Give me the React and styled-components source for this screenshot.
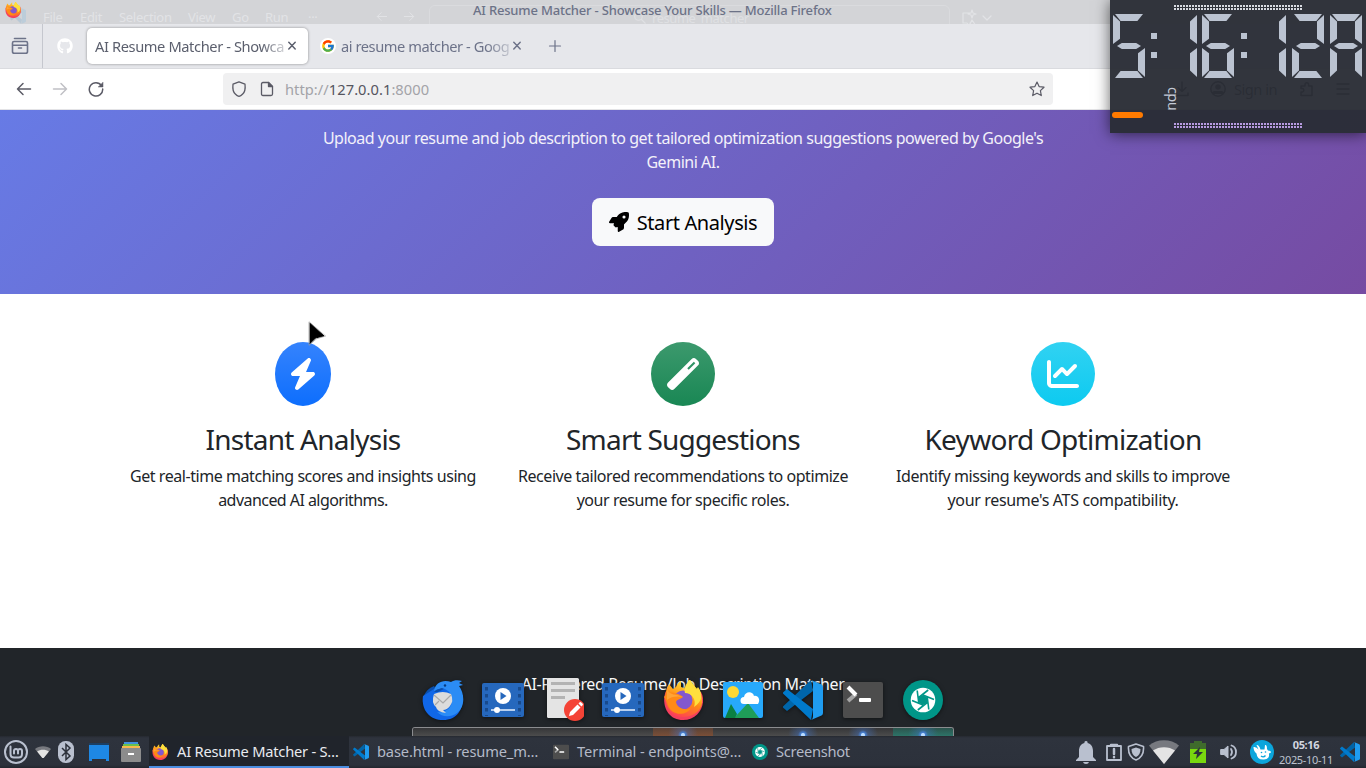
import React from "react";
import styled, { createGlobalStyle, css } from "styled-components";
import { FaGithub, FaRocket, FaWandMagic, FaChartLine } from "react-icons/fa6";
import { FcGoogle } from "react-icons/fc";

const GlobalStyle = createGlobalStyle`
  * { box-sizing: border-box; }
  body { margin: 0; overflow: hidden; font-family: "Noto Sans", "Open Sans", sans-serif; }
  svg { display: block; flex: none; }
`;

const Desktop = styled.div`
  position: relative;
  display: flex;
  flex-direction: column;
  width: 1366px;
  height: 768px;
  overflow: hidden;
  background: #fff;
`;

/* ---------- window chrome ---------- */
const TitleBar = styled.header`
  position: relative;
  flex: none;
  height: 24px;
  overflow: hidden;
  background: #d3d4d7;
`;
const TitleText = styled.div`
  position: relative;
  padding-left: 473px;
  font-size: 13px;
  line-height: 21px;
  font-weight: 500;
  letter-spacing: -0.19px;
  color: #6c7287;
  white-space: nowrap;
`;
const TitleIcon = styled.div`
  position: absolute;
  left: 5px;
  top: 2px;
`;
const GhostMenu = styled.div`
  position: absolute;
  inset: 8px 0 0 0;
  display: flex;
  padding-left: 10px;
  font-size: 13px;
  line-height: 18px;
  color: #e2e3e6;
  white-space: nowrap;
`;
const GhostItem = styled.span`
  width: ${(p) => p.$w}px;
  letter-spacing: -0.3px;
`;
const GhostSearch = styled.span`
  display: flex;
  align-items: center;
  gap: 6px;
  width: 521px;
  height: 30px;
  margin-top: -3px;
  padding: 0 0 5px 204px;
  border: 1px solid #dadbde;
  border-radius: 6px;
  letter-spacing: -0.45px;
  color: #dfe0e3;
`;
const GhostAssist = styled.span`
  margin-left: 12px;
`;

const TabBar = styled.div`
  display: flex;
  flex: none;
  height: 45px;
  background: #e6e7eb;
  border-bottom: 1px solid #dadbdf;
  color: #6d7389;
`;
const TabTool = styled.div`
  display: flex;
  align-items: center;
  justify-content: center;
  width: ${(p) => p.$w}px;
  padding-right: ${(p) => p.$shift || 0}px;
  ${(p) => p.$divided && css`border-right: 1px solid #c5c7ce;`}
`;
const Tab = styled.div`
  display: flex;
  align-items: center;
  width: ${(p) => p.$w}px;
  height: 36px;
  margin: 4px 0 0 0;
  padding: 0 9px 0 8px;
  border-radius: 5px;
  color: #6d7389;
  ${(p) => p.$active && css`
    background: #fff;
    color: #5b5f6d;
    box-shadow: 0 0 3px rgba(0, 0, 0, 0.4);
  `}
`;
const TabLabel = styled.span`
  flex: 1;
  overflow: hidden;
  font-size: 14.67px;
  letter-spacing: ${(p) => p.$ls}px;
  white-space: nowrap;
  mask-image: linear-gradient(to right, #000 calc(100% - 24px), rgba(0, 0, 0, 0.25));
`;
const Favicon = styled.span`
  display: flex;
  align-items: center;
  justify-content: center;
  width: 16px;
  height: 16px;
  margin: 0 5px 0 4px;
  border-radius: 8px;
  background: #fff;
`;

const ToolBar = styled.div`
  display: flex;
  align-items: center;
  flex: none;
  height: 41px;
  background: #fff;
  border-bottom: 1px solid #e3e3e6;
  color: #5b5b66;
`;
const NavButtons = styled.div`
  display: flex;
  align-items: center;
  gap: 20px;
  width: 223px;
  padding-left: 16px;
`;
const UrlBox = styled.div`
  display: flex;
  align-items: center;
  gap: 12px;
  width: 830px;
  height: 32px;
  padding: 0 8px;
  border-radius: 4px;
  background: #f0f0f1;
`;
const Url = styled.span`
  flex: 1;
  margin-left: -2px;
  font-size: 14.67px;
  letter-spacing: 0.05px;
  color: #a3a3a8;
  b { font-weight: 400; color: #55555f; }
`;
const Account = styled.div`
  display: flex;
  align-items: center;
  gap: 20px;
  margin-left: 121px;
  font-size: 14.67px;
  letter-spacing: -0.5px;
  color: #333;
  span { width: 45px; margin-left: -12px; }
`;

/* ---------- page ---------- */
const Hero = styled.section`
  display: flex;
  flex-direction: column;
  align-items: center;
  flex: none;
  height: 184px;
  padding-top: 16px;
  background: linear-gradient(135deg, #667eea 0%, #764ba2 100%) bottom / 100% 291px no-repeat;
`;
const Lead = styled.p`
  margin: 0 0 24px;
  font-size: 16px;
  line-height: 24px;
  letter-spacing: -0.48px;
  text-align: center;
  color: #f3f1fa;
`;
const StartButton = styled.button`
  display: flex;
  align-items: center;
  justify-content: center;
  gap: 8px;
  width: 182px;
  height: 48px;
  padding: 0;
  border: 0;
  border-radius: 8px;
  background: #f8f9fa;
  color: #000;
  font: 400 20px "Noto Sans", sans-serif;
  letter-spacing: -0.4px;
`;
const Features = styled.section`
  display: grid;
  grid-template-columns: repeat(3, 380px);
  justify-content: center;
  flex: none;
  height: 354px;
  padding-top: 48px;
`;
const Feature = styled.article`
  display: flex;
  flex-direction: column;
  align-items: center;
  text-align: center;
  color: #212529;
`;
const FeatureIcon = styled.div`
  display: flex;
  align-items: center;
  justify-content: center;
  width: ${(p) => p.$w}px;
  height: 64px;
  border-radius: 50%;
  color: #fff;
  background: linear-gradient(180deg, ${(p) => p.$from}, ${(p) => p.$to});
`;
const FeatureTitle = styled.h3`
  margin: 16px 0 8px;
  font-size: 28px;
  line-height: 34px;
  font-weight: 400;
  letter-spacing: ${(p) => p.$ls}px;
`;
const FeatureText = styled.p`
  margin: 0;
  font-size: 16px;
  line-height: 24px;
  letter-spacing: -0.44px;
`;
const Tail = styled.span`
  letter-spacing: ${(p) => p.$ls}px;
`;
const Footer = styled.footer`
  flex: none;
  height: 88px;
  padding-top: 24px;
  background: #212529;
  color: #f8f9fa;
  font-size: 16px;
  line-height: 24px;
  letter-spacing: -0.37px;
  text-align: center;
`;

/* ---------- taskbar ---------- */
const TaskBar = styled.nav`
  display: flex;
  flex: none;
  height: 32px;
  background: linear-gradient(180deg, #252930 0, #2e333d 2px, #2c313b 29px, #22262e 32px);
  color: #b4bac8;
`;
const Launchers = styled.div`
  display: flex;
  align-items: center;
  flex: none;
  width: 149px;
  padding-left: 3px;
`;
const Divider = styled.i`
  width: 2px;
  height: 23px;
  margin: 0 9px 0 5px;
  background: #696e7a;
`;
const Task = styled.div`
  display: flex;
  align-items: center;
  gap: ${(p) => (p.$active ? 9 : 8)}px;
  width: 200px;
  padding-left: ${(p) => p.$pad}px;
  font-size: 14.67px;
  letter-spacing: ${(p) => p.$ls}px;
  white-space: nowrap;
  border-bottom: 2px solid transparent;
  ${(p) => p.$active && css`
    background: #20242b;
    border-color: #4a8de0;
    color: #e9ebf0;
  `}
  svg { margin-top: 2px; }
`;
const Tray = styled.div`
  display: flex;
  align-items: center;
  margin-left: auto;
  padding-right: 5px;
`;
const TrayItem = styled.span`
  display: flex;
  flex: none;
  justify-content: center;
  width: ${(p) => p.$w}px;
`;
const DateTime = styled.div`
  display: flex;
  flex-direction: column;
  align-items: center;
  width: 56px;
  margin-right: 5px;
  font-size: 11px;
  line-height: 15px;
  letter-spacing: -0.34px;
  color: #bcc2cf;
  b { color: #d3d7e0; }
`;

/* ---------- dock ---------- */
const Dock = styled.div`
  position: absolute;
  left: 412px;
  top: 676px;
  display: flex;
  flex-direction: column;
  width: 542px;
  height: 60px;
`;
const DockIcons = styled.div`
  position: absolute;
  inset: 0 0 auto 1px;
  display: flex;
`;
const DockIcon = styled.span`
  display: flex;
  align-items: center;
  justify-content: center;
  width: 60px;
  height: 48px;
  filter: drop-shadow(0 1px 2px rgba(0, 0, 0, 0.5));
`;
const DockShelf = styled.div`
  display: flex;
  height: 9px;
  margin-top: 51px;
  overflow: hidden;
  border: 1px solid #8b8c8f;
  border-bottom: 0;
  border-radius: 3px 3px 0 0;
`;
const ShelfCell = styled.span`
  width: 60px;
  background: linear-gradient(180deg, ${(p) => p.$top || "#353638"}, ${(p) => p.$bottom || "#4c4c4c"});
  ${(p) => p.$running && css`
    background:
      radial-gradient(circle at 50% 7px, #b9dcff 0 1.5px, #477fd0 2.5px, rgba(65, 120, 210, 0.35) 5px, transparent 15px),
      linear-gradient(180deg, ${p.$top || "#353638"}, ${p.$bottom || "#4c4c4c"});
  `}
`;

/* ---------- clock widget ---------- */
const Widget = styled.aside`
  position: absolute;
  right: 0;
  top: 0;
  width: 256px;
  height: 133px;
  background: rgba(42, 45, 53, 0.96);
  box-shadow: 0 1px 14px rgba(0, 0, 0, 0.6);
`;
const DotStrip = styled.div`
  width: 128px;
  height: 5px;
  margin-left: 64px;
  background: linear-gradient(90deg, ${(p) => p.$color} 2px, transparent 2px) 0 0 / 3px 3px;
  mask: linear-gradient(180deg, #000 2px, transparent 2px) 0 0 / 3px 3px;
`;
const WidgetTop = styled.div`
  padding-top: 5px;
`;
const Digits = styled.div`
  display: flex;
  margin: 4px 0 0 3px;
`;
const Digit = styled.span`
  position: relative;
  flex: none;
  width: 32px;
  height: 64px;
  margin-right: ${(p) => p.$gap}px;
`;
const places = {
  a: "left:2px;top:0;width:28px;height:7px;clip-path:polygon(0 0,100% 0,80% 100%,20% 100%);",
  d: "left:2px;bottom:0;width:28px;height:7px;clip-path:polygon(20% 0,80% 0,100% 100%,0 100%);",
  g: "left:4px;top:29px;width:24px;height:6px;clip-path:polygon(0 50%,20% 0,80% 0,100% 50%,80% 100%,20% 100%);",
  f: "left:0;top:1px;width:7px;height:29px;clip-path:polygon(0 0,100% 22%,100% 82%,0 100%);",
  e: "left:0;top:34px;width:7px;height:29px;clip-path:polygon(0 0,100% 18%,100% 78%,0 100%);",
  b: "right:0;top:1px;width:7px;height:29px;clip-path:polygon(0 22%,100% 0,100% 100%,0 82%);",
  c: "right:0;top:34px;width:7px;height:29px;clip-path:polygon(0 18%,100% 0,100% 100%,0 78%);",
};
const Segment = styled.i`
  position: absolute;
  background: #bbc3d1;
  ${(p) => places[p.$at]}
`;
const Colon = styled.span`
  display: flex;
  flex-direction: column;
  gap: 13px;
  width: 6px;
  margin-right: ${(p) => p.$gap}px;
  padding-top: 19px;
  i { height: 6px; background: #bbc3d1; }
`;
const Gauge = styled.div`
  display: flex;
  align-items: flex-end;
  height: 40px;
`;
const GaugeBar = styled.i`
  width: 31px;
  height: 6px;
  margin: 0 0 0 2px;
  border-radius: 3px;
  background: #ff7a00;
`;
const GaugeLabel = styled.span`
  margin: 0 0 6px 23px;
  height: 25px;
  font-size: 14.5px;
  line-height: 16px;
  letter-spacing: -0.6px;
  writing-mode: vertical-rl;
  color: #c3c9d6;
`;

const Stroke = ({ size = 16, w = 1.5, children, vb = "0 0 16 16", ...rest }) => (
  <svg width={size} height={size} viewBox={vb} fill="none" stroke="currentColor" strokeWidth={w} strokeLinecap="round" strokeLinejoin="round" {...rest}>
    {children}
  </svg>
);

const Close = () => <Stroke size={14} w={1.5} vb="0 0 14 14"><path d="M3.800 3.300l6.400 6.600M10.200 3.300l-6.400 6.600" /></Stroke>;

const Firefox = ({ size }) => (
  <svg width={size} height={size} viewBox="0 0 40 40">
    <defs>
      <linearGradient id="flame" x1="0.7" y1="0" x2="0.3" y2="1">
        <stop offset="0.2" stopColor="#ffd02e" /><stop offset="0.55" stopColor="#ff8a16" /><stop offset="1" stopColor="#ff3d57" />
      </linearGradient>
    </defs>
    <path fill="#f43f5e" d="M3 11C-2 22 3 40 20 40s24-18 18-28z" />
    <path fill="url(#flame)" d="M4 8c0-1 1-2 2-4l4 5 3-2c1-3 3-5 5-6v6l6 2 1-8 2-2c1 5 6 8 9 12 8 12 0 26-15 26C6 38-1 22 4 8z" />
    <circle cx="20" cy="20" r="9.500" fill="#8358cf" />
    <path fill="#ffdf3d" d="M27 0c-5 4-6 9-5 13 6 0 12 6 9 14 9-6 9-13 4-20l-2 3c0-3-3-6-6-10z" />
    <path fill="#ff8a16" d="M1 17c3-5 8-5 11-4 4 1 7 3 8 4-2 2-6 2-7 5 1 6 9 9 15 6-5 9-22 8-24-6z" />
    <path fill="#ffa436" d="M4 8c0 4 5 7 10 7l6 2c-5-1-12-1-16 3z" />
  </svg>
);
const Code = ({ size, dim }) => (
  <svg width={size} height={size} viewBox="0 0 40 40" opacity={dim ? 0.12 : 1}>
    <path fill="#0065a9" d="M28 0l2 11L4 31 .5 28c-.7-.6-.7-1.4 0-2z" />
    <path fill="#007acc" d="M28 40l2-11L4 9 .5 12c-.7.6-.7 1.4 0 2z" />
    <path fill="#1f9cf0" d="M28 0l10.500 4.500Q40 5.200 40 7v26q0 1.800-1.500 2.500L28 40c1.500-1 2-2 2-4V4c0-2-.5-3-2-4z" />
  </svg>
);
const Terminal = ({ size }) => (
  <svg width={size} height={size} viewBox="0 0 40 40">
    <rect y="2" width="40" height="36" rx="2" fill="#4d4d4d" />
    <path d="M5 21l8-7" stroke="#a5a5a5" strokeWidth="4" />
    <path d="M5 7l8 8" stroke="#fff" strokeWidth="4" />
    <rect x="16" y="18" width="12" height="4" rx="1" fill="#fff" />
  </svg>
);
const Shutter = ({ size }) => (
  <svg width={size} height={size} viewBox="0 0 40 40">
    <circle cx="20" cy="20" r="20" fill="#009688" />
    <circle cx="20" cy="20" r="12.300" fill="#fff" />
    <path d="M20 15l4.300 2.500v5L20 25l-4.300-2.500v-5z" fill="#009688" />
    <path d="M20 15L31 19.500M24.300 17.500l1.500 12M24.300 22.500l-9.500 7.500M20 25L9 20.500M15.700 22.500l-1.500-12M15.700 17.500l9.500-7.500" stroke="#009688" strokeWidth="1.600" />
  </svg>
);
const Video = () => (
  <svg width="42" height="34" viewBox="0 0 42 34">
    <rect width="42" height="34" rx="2" fill="#2668bd" />
    <path d="M4.500 4v29M37.500 4v29" stroke="#184a8c" strokeWidth="3" strokeDasharray="3.500 3.500" />
    <circle cx="21" cy="13" r="8" fill="#fff" />
    <path d="M18.500 9v8l6-4z" fill="#2668bd" />
    <path d="M9 27h24" stroke="#b8d0ef" strokeWidth="2" />
    <circle cx="15" cy="27" r="3" fill="#fff" />
  </svg>
);
const Mail = () => (
  <svg width="42" height="42" viewBox="0 0 42 42">
    <path fill="#0a4fae" d="M12 7C5 10 0 16 1 24l5 8 12-16z" />
    <path fill="#1067e8" d="M1 17c-2 13 6 24 20 24s20-10 20-24L34 8 12 10z" />
    <path fill="#2b8cf5" d="M12 12C13 3 22 0 29 3c3-2 7-2 11-1l-3 2 4 2-4 1c6 8 6 21-2 27-7 5-15 4-20-1 5 1 10-1 13-5 5-8 1-17-8-19z" />
    <path fill="#0a4fae" d="M12 13c2-3 6-4 10-3l-6 3z" />
    <path d="M12 15q9-4 17 0 3 7-1 12-3 4-7 4l3 3q-9-1-10-6-5-4-2-13z" fill="#dcdcdc" />
    <path d="M12 16l9 8 8-8M13 26l4-4" stroke="#a9a9a9" fill="none" strokeWidth="1.200" />
    <circle cx="23" cy="6.500" r="1.200" fill="#073a80" />
  </svg>
);
const Editor = () => (
  <svg width="42" height="44" viewBox="-4 1 42 44">
    <rect x="1" y="1" width="32" height="40" rx="1.500" fill="#e4e4e4" />
    <path d="M5 6.500h24M5 13.500h24M5 20.500h14" stroke="#b3b3b3" strokeWidth="3" />
    <circle cx="29" cy="33" r="11" fill="#f44336" />
    <path d="M23 39l1-4 7.500-7.500 3 3L27 38zM32.500 26.500l1.200-1.200q.8-.6 1.600.1l1.400 1.400q.6.7-.1 1.500l-1.200 1.200z" fill="#fff" />
  </svg>
);
const Photos = () => (
  <svg width="40" height="36" viewBox="0 0 40 36">
    <rect width="40" height="36" rx="2" fill="#27a9fb" />
    <circle cx="10" cy="10" r="6" fill="#fdd835" />
    <path d="M11 36l14-15 11 15z" fill="#1f9d58" />
    <path d="M2 36l6-14 6 10-2 4z" fill="#0b8043" />
    <path d="M21 22a3.500 3.500 0 010-7c1-6 9-6 10-1 4-1 7 4 4 8z" fill="#fff" />
  </svg>
);
const Mint = () => (
  <Stroke size={26} w={2} vb="0 0 26 26" color="#b9c0cf">
    <circle cx="13" cy="13" r="11" />
    <path d="M7.500 7.500v7.500q0 3.500 3.500 3.500h4.500q3.500 0 3.500-3.500v-3a2 2 0 00-4 0v2.500m0-2.500a2 2 0 00-4 0v2.500" />
  </Stroke>
);
const Wifi = ({ size }) => (
  <svg width={size} height={size * 0.8} viewBox="0 0 30 24">
    <path d="M15 24L0 5.500C8-1.500 22-1.500 30 5.500z" fill="#77797f" />
    <path d="M15 24L4 10.500C10 6 20 6 26 10.500z" fill="#e4e4e4" />
  </svg>
);
const Bluetooth = () => (
  <svg width="16" height="22" viewBox="0 0 16 22">
    <rect width="16" height="22" rx="7.500" fill="#b9c0cf" />
    <path d="M4 7l8 8-4 3.500v-15L12 7l-8 8" fill="none" stroke="#2c313b" strokeWidth="1.500" />
  </svg>
);
const ShowDesktop = () => (
  <svg width="20" height="18" viewBox="0 0 20 18">
    <rect width="20" height="2" fill="#1c3f63" /><path fill="#1e88e5" d="M0 2h20v16h-3v-2H3v2H0z" />
  </svg>
);
const Cabinet = () => (
  <svg width="20" height="20" viewBox="0 0 20 20">
    <rect x="3" width="14" height="4" fill="#4191dd" /><rect x="2" y="2" width="16" height="4" fill="#6cc04a" />
    <rect x="1" y="4" width="18" height="4" fill="#f9b94b" /><rect y="6" width="20" height="14" rx="1" fill="#8c8c8c" />
    <rect x="7" y="11" width="6" height="2" fill="#fff" />
  </svg>
);
const Cursor = styled.svg`
  position: absolute;
  left: 307px;
  top: 321px;
`;

const dock = [
  [<Mail />], [<Video />], [<Editor />], [<Video />],
  [<Firefox size={40} />, "#5b4236", "#7a4f38", true],
  [<Photos />],
  [<Code size={40} />, "", "", true],
  [<Terminal size={40} />, "", "", true],
  [<Shutter size={40} />, "#2c534d", "#2d7468", true],
];

const clock = [
  ["acdfg", 6], [":", 8], ["bc", 5], ["acdefg", 7], [":", 7], ["bc", 6], ["abdeg", 6], ["abcefg", 0],
];

export default function App() {
  return (
    <Desktop>
      <GlobalStyle />
      <TitleBar>
        <GhostMenu>
          <GhostItem $w={33}><Code size={16} dim /></GhostItem>
          <GhostItem $w={37}>File</GhostItem>
          <GhostItem $w={39}>Edit</GhostItem>
          <GhostItem $w={69}>Selection</GhostItem>
          <GhostItem $w={44}>View</GhostItem>
          <GhostItem $w={33}>Go</GhostItem>
          <GhostItem $w={43}>Run</GhostItem>
          <GhostItem $w={67}>···</GhostItem>
          <GhostItem $w={27}><Stroke size={14} w={1.200} vb="0 0 14 18"><path d="M13 11H1M6 6l-5 5 5 5" /></Stroke></GhostItem>
          <GhostItem $w={27}><Stroke size={14} w={1.200} vb="0 0 14 18"><path d="M1 11h12M8 6l5 5-5 5" /></Stroke></GhostItem>
          <GhostSearch>
            <Stroke size={12} vb="0 0 16 16"><circle cx="6" cy="6" r="5" /><path d="M10 10l5 5" /></Stroke>resume_matcher
          </GhostSearch>
          <GhostAssist>
            <Stroke size={30} w={1.200} vb="0 -1 30 30"><path d="M8 4H1v10h4l3 4v-4M10 1l1 3 3 1-3 1-1 3-1-3-3-1 3-1zM10 11l4 6H7zM21 7l4 4 4-4" /></Stroke>
          </GhostAssist>
        </GhostMenu>
        <TitleIcon><Firefox size={16} /></TitleIcon>
        <TitleText>AI Resume Matcher - Showcase Your Skills — Mozilla Firefox</TitleText>
      </TitleBar>

      <TabBar>
        <TabTool $w={43} $shift={3} $divided>
          <Stroke size={18} vb="0 0 18 18" w={1.600}>
            <path d="M3.500 1.500h11" /><path d="M3 4.500h12q1.500 0 1.500 1.500v8.500q0 1.800-1.800 1.800H3.300q-1.800 0-1.800-1.800V6Q1.500 4.500 3 4.500zM1.500 8.300h15M7.500 11h3" />
          </Stroke>
        </TabTool>
        <TabTool $w={44}><FaGithub size={16} color="#fff" /></TabTool>
        <Tab $active $w={221}>
          <TabLabel $ls={-0.4}>AI Resume Matcher - Showca</TabLabel>
          <Close />
        </Tab>
        <Tab $w={225}>
          <Favicon><FcGoogle size={14} /></Favicon>
          <TabLabel $ls={-0.45}>ai resume matcher - Goog</TabLabel>
          <Close />
        </Tab>
        <TabTool $w={43}><Stroke size={14} vb="0 0 14 14" w={1.200}><path d="M7 1.500v11M1.500 7h11" /></Stroke></TabTool>
      </TabBar>

      <ToolBar>
        <NavButtons>
          <Stroke><path d="M14.500 8h-13M7 2.500L1.500 8 7 13.500" /></Stroke>
          <Stroke color="#c0c0c5"><path d="M1.500 8h13M9 2.500L14.500 8 9 13.500" /></Stroke>
          <Stroke><path d="M13.500 4.500A6.700 6.700 0 1014.700 8" /><path d="M15 1.500v4.500h-4.500z" fill="currentColor" strokeWidth="0.500" /></Stroke>
        </NavButtons>
        <UrlBox>
          <Stroke><path d="M8 .8l6 2.400q.8 7-2.300 9.800Q9.800 15 8 15.300 6.200 15 4.300 13 1.200 10.200 2 3.200z" strokeWidth="1.300" /></Stroke>
          <Stroke w={1.300}><path d="M4 1.500h5.500l4 4v7.500q0 1.500-1.500 1.500H4Q2.500 14.500 2.500 13V3Q2.500 1.500 4 1.500z" /><path d="M9.500 1.500v4h4z" fill="currentColor" /></Stroke>
          <Url>http://<b>127.0.0.1</b>:8000</Url>
          <Stroke w={1.200}><path d="M8 1l2.100 4.600 4.900.6-3.600 3.400.9 5L8 12.200l-4.300 2.400.9-5L1 6.200l4.900-.6z" /></Stroke>
        </UrlBox>
        <Account>
          <Stroke><path d="M8 1v9M4 6.500l4 4 4-4M2 12v2.500h12V12" /></Stroke>
          <Stroke><circle cx="8" cy="8" r="7.200" /><circle cx="8" cy="6" r="2" fill="currentColor" /><path d="M4 11.500h8" strokeWidth="3" /></Stroke>
          <span>Sign in</span>
          <Stroke><path d="M2 5h4V3.500a1.800 1.800 0 013.600 0V5H13v9.500H2V11h1.500a1.800 1.800 0 000-3.500H2z" /></Stroke>
          <Stroke><path d="M2 3h12M2 8h12M2 13h12" /></Stroke>
        </Account>
      </ToolBar>

      <Hero>
        <Lead>
          Upload your resume and job description to get tailored optimization suggestions powered by Google's
          <br />
          Gemini AI.
        </Lead>
        <StartButton><FaRocket size={20} />Start Analysis</StartButton>
      </Hero>

      <Features>
        <Feature>
          <FeatureIcon $w={56} $from="#3583fd" $to="#0d6efd">
            <svg width="24" height="32" viewBox="0 0 384 512" fill="#fff">
              <path d="M240.500 224H352C365.300 224 377.300 232.300 381.100 244.700C386.600 257.200 383.100 271.300 373.100 280.100L117.100 504.100C105.800 513.900 89.270 514.700 77.190 505.900C65.100 497.100 60.700 481.100 66.590 467.400L143.500 288H31.100C18.670 288 6.733 279.700 2.044 267.300C-2.645 254.800 .8944 240.700 10.930 231.900L266.900 7.918C278.200-1.920 294.800-2.669 306.900 6.114C318.100 14.900 323.300 30.870 317.400 44.610L240.500 224z" />
            </svg>
          </FeatureIcon>
          <FeatureTitle $ls={-0.76}>Instant Analysis</FeatureTitle>
          <FeatureText>Get real-time matching scores and insights using<br /><Tail $ls={-0.55}>advanced AI algorithms.</Tail></FeatureText>
        </Feature>
        <Feature>
          <FeatureIcon $w={64} $from="#3c996d" $to="#198754"><FaWandMagic size={32} /></FeatureIcon>
          <FeatureTitle $ls={-0.8}>Smart Suggestions</FeatureTitle>
          <FeatureText>Receive tailored recommendations to optimize<br />your resume for specific roles.</FeatureText>
        </Feature>
        <Feature>
          <FeatureIcon $w={64} $from="#31d2f2" $to="#0dcaf0"><FaChartLine size={32} /></FeatureIcon>
          <FeatureTitle $ls={-0.73}>Keyword Optimization</FeatureTitle>
          <FeatureText>Identify missing keywords and skills to improve<br /><Tail $ls={-0.34}>your resume's ATS compatibility.</Tail></FeatureText>
        </Feature>
      </Features>

      <Footer>AI-Powered Resume/Job Description Matcher</Footer>

      <TaskBar>
        <Launchers>
          <Mint />
          <TrayItem $w={28}><Wifi size={16} /></TrayItem>
          <TrayItem $w={18}><Bluetooth /></TrayItem>
          <Divider />
          <TrayItem $w={20}><ShowDesktop /></TrayItem>
          <TrayItem $w={44}><Cabinet /></TrayItem>
        </Launchers>
        <Task $active $pad={3} $ls={-0.22}><Firefox size={16} />AI Resume Matcher - S…</Task>
        <Task $pad={4} $ls={-0.16}><Code size={16} />base.html - resume_m…</Task>
        <Task $pad={4} $ls={-0.1}><Terminal size={16} />Terminal - endpoints@…</Task>
        <Task $pad={3} $ls={-0.28}><Shutter size={16} />Screenshot</Task>
        <Tray>
          <TrayItem $w={30}>
            <svg width="20" height="23" viewBox="0 0 20 23" fill="#b9c0cf"><path d="M10 0a1.500 1.500 0 011.500 2C16 3 17 7 17 10v6l3 3v1H0v-1l3-3v-6c0-3 1-7 5.500-8A1.500 1.500 0 0110 0zM7 21h6q-.5 2-3 2t-3-2z" /></svg>
          </TrayItem>
          <TrayItem $w={26}>
            <Stroke size={18} vb="0 0 18 18" color="#b9c0cf" w={1.800}><rect x="2" y="3" width="14" height="14" /><path d="M6 2h6M9 6v5M9 14v.2" strokeWidth="2.500" /></Stroke>
          </TrayItem>
          <TrayItem $w={18}>
            <Stroke size={18} vb="0 0 18 18" color="#b9c0cf" w={1.600}><path d="M9 1l7.500 2.500C17 10 14 15 9 17 4 15 1 10 1.500 3.500z" /><path d="M9 4.500l4.500 1.500C13.500 10 12 12.500 9 14 6 12.500 4.500 10 4.500 6z" fill="#b9c0cf" strokeWidth="0" /></Stroke>
          </TrayItem>
          <TrayItem $w={38}><Wifi size={30} /></TrayItem>
          <TrayItem $w={30}>
            <svg width="16" height="22" viewBox="0 0 16 22"><path d="M4 0h8v2h4v20H0V2h4z" fill="#3f6b2c" /><path d="M0 8h16v14H0z" fill="#79d70f" /><path d="M10 6l-7 7h4l-1 5 7-7H9z" fill="#2c313b" /></svg>
          </TrayItem>
          <TrayItem $w={32}>
            <Stroke size={18} vb="0 0 18 18" color="#b9c0cf" w={1.800}><path d="M1 6.500h3L8 3v12l-4-3.500H1z" fill="#b9c0cf" strokeWidth="1" /><path d="M11 6q2 3 0 6M11.500 2.500c6 2 6 11 0 13" /></Stroke>
          </TrayItem>
          <TrayItem $w={33}>
            <svg width="24" height="24" viewBox="0 0 24 24">
              <circle cx="12" cy="12" r="12" fill="#0ba5dc" />
              <path d="M3.500 7q3-.5 5 2.500L6.500 5q2.500-.5 4 4.500h4l.5-4.500q2-.5 2 4l1 1.500q3 0 3 2l-2 1q1 5.500-5 6-7 .5-7.500-6Q3.500 11 3.500 7z" fill="#fff" />
              <path d="M11 16q2.500 2 4.500-.5" fill="none" stroke="#0ba5dc" strokeWidth="1.300" />
              <circle cx="11.500" cy="12.500" r="0.800" fill="#0ba5dc" /><circle cx="15.500" cy="12" r="0.800" fill="#0ba5dc" />
            </svg>
          </TrayItem>
          <DateTime><b>05:16</b><span>2025-10-11</span></DateTime>
          <TrayItem $w={22}><Code size={20} /></TrayItem>
        </Tray>
      </TaskBar>

      <Dock>
        <DockShelf>
          {dock.map(([, top, bottom, running], i) => (
            <ShelfCell key={i} $top={top} $bottom={bottom} $running={running} />
          ))}
        </DockShelf>
        <DockIcons>
          {dock.map(([icon], i) => <DockIcon key={i}>{icon}</DockIcon>)}
        </DockIcons>
      </Dock>

      <Widget>
        <WidgetTop><DotStrip $color="#d9dce3" /></WidgetTop>
        <Digits role="img" aria-label="5:16:12A">
          {clock.map(([on, gap], i) =>
            on === ":" ? (
              <Colon key={i} $gap={gap}><i /><i /></Colon>
            ) : (
              <Digit key={i} $gap={gap}>{on.split("").map((s) => <Segment key={s} $at={s} />)}</Digit>
            )
          )}
        </Digits>
        <Gauge>
          <GaugeBar />
          <GaugeLabel>cpu</GaugeLabel>
        </Gauge>
        <WidgetTop><DotStrip $color="#b79be0" /></WidgetTop>
      </Widget>

      <Cursor width="20" height="26" viewBox="0 0 20 26">
        <path d="M3 2v20.500l5.500-5.500 8.500-2z" fill="#000" stroke="#000" strokeWidth="1" strokeLinejoin="round" />
        <path d="M2 .8v23.500l7.500-6.500 9-2.800z" fill="none" stroke="#999" strokeWidth="0.700" strokeLinejoin="round" />
      </Cursor>
    </Desktop>
  );
}
